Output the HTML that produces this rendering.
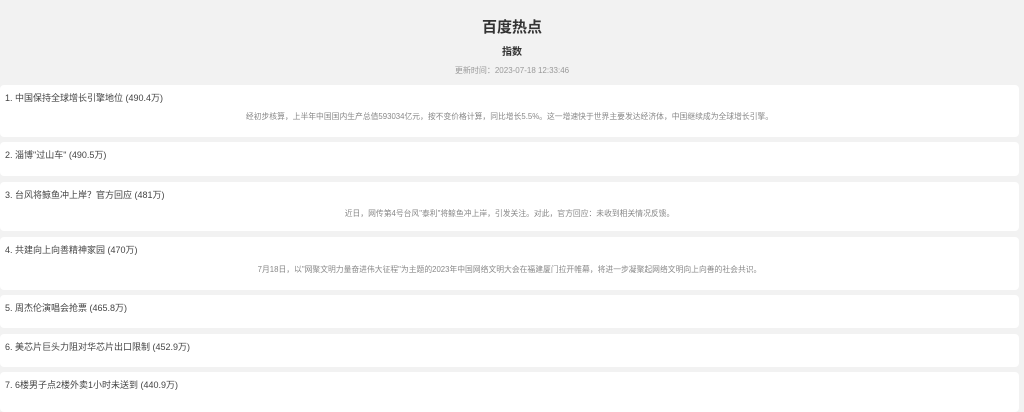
<!DOCTYPE html>
<html><head><meta charset="utf-8"><style>
body{margin:0;background:#f2f2f2;font-family:"Liberation Sans","Noto Sans CJK SC",sans-serif;width:1024px;height:406px;overflow:hidden;position:relative}
.h1{position:absolute;top:16px;width:1024px;text-align:center;font-size:15px;font-weight:bold;color:#333}
.h2{position:absolute;top:43px;width:1024px;text-align:center;font-size:10px;font-weight:bold;color:#333}
.t{position:absolute;top:65px;width:1024px;text-align:center;font-size:8px;color:#999}
.c{position:absolute;left:0;width:1019px;background:#fff;border-radius:4px}
.c .a{position:absolute;left:5px;top:6px;font-size:9px;color:#444;white-space:nowrap}
.c .d{position:absolute;left:0;width:1019px;top:26px;text-align:center;font-size:7.8px;color:#888;white-space:nowrap}
</style></head><body>
<div class="h1">百度热点</div>
<div class="h2">指数</div>
<div class="t">更新时间：2023-07-18 12:33:46</div>
<div class="c" style="top:85px;height:52px"><div class="a">1. 中国保持全球增长引擎地位 (490.4万)</div><div class="d">经初步核算，上半年中国国内生产总值593034亿元，按不变价格计算，同比增长5.5%。这一增速快于世界主要发达经济体，中国继续成为全球增长引擎。</div></div>
<div class="c" style="top:142px;height:34px"><div class="a">2. 淄博"过山车" (490.5万)</div></div>
<div class="c" style="top:182px;height:49px"><div class="a">3. 台风将鲸鱼冲上岸？官方回应 (481万)</div><div class="d">近日，网传第4号台风"泰利"将鲸鱼冲上岸，引发关注。对此，官方回应：未收到相关情况反馈。</div></div>
<div class="c" style="top:237px;height:53px"><div class="a">4. 共建向上向善精神家园 (470万)</div><div class="d" style="top:27px">7月18日，以"网聚文明力量奋进伟大征程"为主题的2023年中国网络文明大会在福建厦门拉开帷幕，将进一步凝聚起网络文明向上向善的社会共识。</div></div>
<div class="c" style="top:295px;height:33px"><div class="a">5. 周杰伦演唱会抢票 (465.8万)</div></div>
<div class="c" style="top:334px;height:33px"><div class="a">6. 美芯片巨头力阻对华芯片出口限制 (452.9万)</div></div>
<div class="c" style="top:372px;height:40px"><div class="a">7. 6楼男子点2楼外卖1小时未送到 (440.9万)</div></div>
</body></html>
